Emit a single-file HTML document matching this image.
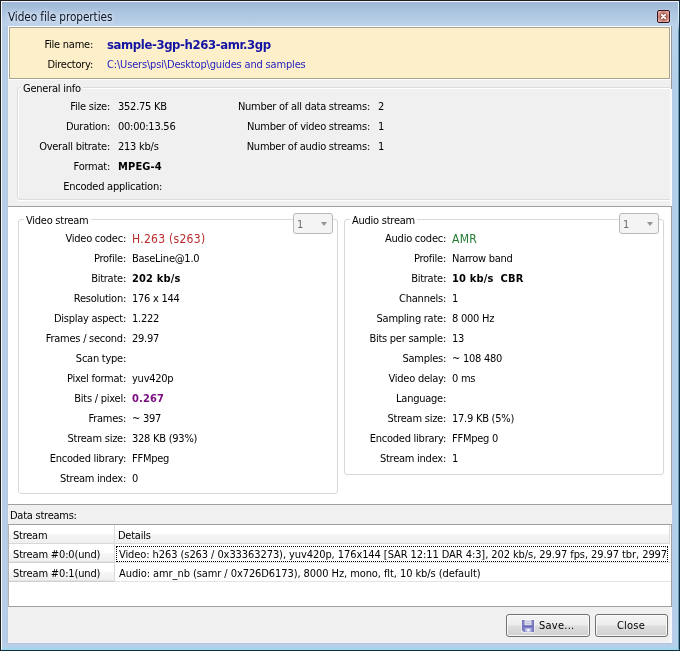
<!DOCTYPE html>
<html>
<head>
<meta charset="utf-8">
<title>Video file properties</title>
<style>
html,body{margin:0;padding:0;}
body{width:680px;height:651px;overflow:hidden;background:#b7cde7;position:relative;
  font-family:"DejaVu Sans Condensed","Liberation Sans",sans-serif;font-size:11px;color:#000;letter-spacing:-0.25px;line-height:14px;}
.abs{position:absolute;}
#win{position:absolute;left:0;top:0;width:680px;height:651px;overflow:hidden;will-change:transform;
  background:linear-gradient(to bottom,#9bb5d3 0px,#a9c2de 10px,#bdd3eb 26px,#b6cde7 80px,#b6cce8 600px,#bccdea 645px,#b0d2ea 647px,#a0d8ea 650px);}
#edge{position:absolute;left:0;top:0;width:678px;height:649px;border:1px solid #1c1d1e;border-right-color:#0f2d44;border-bottom-color:#10303f;}
#edge2{position:absolute;left:1px;top:1px;width:676px;height:647px;border:1px solid rgba(255,255,255,.9);border-right-color:rgba(255,255,255,0);border-bottom-color:rgba(255,255,255,0);}
#edge3{position:absolute;left:678px;top:2px;width:1px;height:647px;background:linear-gradient(to bottom,rgba(255,255,255,.9) 0px,rgba(255,255,255,.6) 18px,rgba(40,80,110,.45) 30px,rgba(40,80,110,.45) 100%);}
#botl{position:absolute;left:8px;top:642px;width:664px;height:1px;background:#eef5fb;}
#botl2{position:absolute;left:7px;top:643px;width:666px;height:1px;background:#b4c4d6;}
#rglow{position:absolute;left:674px;top:26px;width:5px;height:622px;background:linear-gradient(to right,rgba(170,214,236,0),rgba(170,214,236,1));}
#title{position:absolute;left:8px;top:9px;font-size:11.7px;line-height:16px;color:#0c142a;letter-spacing:-0.07px;
  text-shadow:0 0 4px rgba(255,255,255,.9),0 0 7px rgba(255,255,255,.7);white-space:nowrap;}
#close{position:absolute;left:657px;top:10px;width:11px;height:11px;border:1px solid #30121e;border-radius:2px;
  background:radial-gradient(ellipse at 50% 50%,#7a4030 0%,#a86454 40%,#dc9a92 68%,#f8c0c0 100%);box-shadow:0 0 0 1px rgba(255,255,255,.12);}
#client{position:absolute;left:8px;top:26px;width:664px;height:617px;background:#f0f0f0;}
.l,.v{position:absolute;white-space:nowrap;height:14px;}
.b{font-weight:bold;letter-spacing:0.15px;}
.red{color:#b82a2a;} .green{color:#237a30;} .purple{color:#7a1080;}
.big{font-size:12px;letter-spacing:0.28px;}
/* top panel */
#tp-wh{position:absolute;left:8px;top:26px;width:663px;height:54px;background:#fff;}
#tp-gr{position:absolute;left:9px;top:27px;width:659px;height:50px;border:1px solid #a5a392;background:#fdefc9;}
#tp-rline{position:absolute;left:671px;top:26px;width:1px;height:63px;background:#9a9a9a;}
#tp-gap{position:absolute;left:8px;top:80px;width:662px;height:7px;background:#f0f0f0;}
#fname{position:absolute;left:107px;top:37px;font-size:13px;line-height:16px;font-weight:bold;color:#1414a4;white-space:nowrap;letter-spacing:-0.4px;}
#dir{color:#1c1cc0;letter-spacing:-0.17px;}
/* group boxes */
.gb{position:absolute;border:1px solid #d8d8d8;border-radius:3px;box-sizing:border-box;}
.gbt{position:absolute;white-space:nowrap;padding:0 2px;height:14px;}
/* white panel */
#wp{position:absolute;left:8px;top:206px;width:663px;height:297px;background:#fff;border-top:1px solid #a0a0a0;border-bottom:1px solid #a0a0a0;border-right:1px solid #a0a0a0;}
.combo{position:absolute;width:38px;height:19px;border:1px solid #b8b8b8;border-radius:3px;background:#f4f4f4;color:#6d6d6d;}
.combo span{position:absolute;left:3px;top:4px;}
.combo i{position:absolute;left:27px;top:8px;width:0;height:0;border-left:3.5px solid transparent;border-right:3.5px solid transparent;border-top:4px solid #959595;}
/* table */
#tbl{position:absolute;left:8px;top:524px;width:662px;height:81px;border:1px solid #a0a0a0;border-left-color:#b0b4b8;background:#fff;overflow:hidden;}
.hd{position:absolute;background:linear-gradient(to bottom,#ffffff 0%,#ffffff 45%,#f5f5f6 55%,#efeff0 100%);border-right:1px solid #dcdcdc;border-bottom:1px solid #d8d8d8;box-sizing:border-box;padding:4px 0 0 4px;white-space:nowrap;}
.rh{letter-spacing:-0.15px;border-bottom-color:#cfcfcf;box-shadow:inset 0 -1px 0 #e4e4e4;}
.cell{position:absolute;white-space:nowrap;overflow:hidden;box-sizing:border-box;border-bottom:1px solid #e4e4e4;padding:4px 0 0 4px;letter-spacing:-0.08px;}
/* buttons */
.btn{position:absolute;top:614px;height:21px;border:1px solid #707070;border-radius:3px;
  background:linear-gradient(to bottom,#f4f4f4 0%,#ececec 48%,#dddddd 52%,#d0d0d0 100%);box-shadow:inset 0 0 0 1px rgba(255,255,255,.8);}
.btn span{position:absolute;top:4px;white-space:nowrap;}
</style>
</head>
<body>
<div id="win">
  <div id="rglow"></div>
  <div class="abs" style="left:2px;top:26px;width:6px;height:618px;background:linear-gradient(to right,#bccbe0 0%,#b5cfeb 35%,#b5cfeb 65%,#b7c7db 100%);"></div>
  <div id="edge"></div>
  <div id="edge2"></div>
  <div id="edge3"></div>
  <div id="title">Video file properties</div>
  <div id="close"><svg class="abs" style="left:3px;top:3px" width="5" height="5" viewBox="0 0 5 5"><path d="M0.7 0.7 L4.3 4.3 M4.3 0.7 L0.7 4.3" stroke="#fff" stroke-width="1.7" stroke-linecap="square" fill="none"/></svg></div>
  <div id="client"></div>
  <div id="botl"></div><div id="botl2"></div>

  <!-- top file panel -->
  <div id="tp-wh"></div>
  <div id="tp-gap"></div>
  <div id="tp-gr"></div>
  <div id="tp-rline"></div>
  <div class="l " style="right:587px;top:38px">File name:</div>
  <div class="l " style="right:587px;top:58px">Directory:</div>
  <div id="fname">sample-3gp-h263-amr.3gp</div>
  <div class="v " id="dir" style="left:107px;top:58px">C:\Users\psi\Desktop\guides and samples</div>

  <!-- general info group -->
  <div class="abs" style="left:8px;top:80px;width:662px;height:126px;overflow:hidden;"><div class="gb" style="left:9px;top:7px;width:670px;height:113px;border-color:#dcdcdc;box-shadow:0 1px 0 #fff,inset 1px 1px 0 #fff;"></div></div>
  <div class="abs" style="left:670px;top:89px;width:2px;height:117px;background:#fbfbfb;"></div>
  <div class="gbt" style="left:21px;top:82px;background:#f0f0f0;">General info</div>

  <!-- white panel with stream groups -->
  <div id="wp"></div>
  <div class="gb" style="left:18px;top:219px;width:320px;height:275px;"></div>
  <div class="gbt" style="left:24px;top:214px;background:#fff;">Video stream</div>
  <div class="gb" style="left:344px;top:219px;width:320px;height:256px;"></div>
  <div class="gbt" style="left:350px;top:214px;background:#fff;">Audio stream</div>
  <div class="combo" style="left:293px;top:213px;"><span>1</span><i></i></div>
  <div class="combo" style="left:619px;top:213px;"><span>1</span><i></i></div>

  <div class="l " style="right:570px;top:100px">File size:</div>
  <div class="v " style="left:118px;top:100px">352.75 KB</div>
  <div class="l " style="right:570px;top:120px">Duration:</div>
  <div class="v " style="left:118px;top:120px">00:00:13.56</div>
  <div class="l " style="right:570px;top:140px">Overall bitrate:</div>
  <div class="v " style="left:118px;top:140px">213 kb/s</div>
  <div class="l " style="right:570px;top:160px">Format:</div>
  <div class="v b" style="left:118px;top:160px">MPEG-4</div>
  <div class="l " style="right:518px;top:180px">Encoded application:</div>
  <div class="l " style="right:310px;top:100px">Number of all data streams:</div>
  <div class="v " style="left:378px;top:100px">2</div>
  <div class="l " style="right:310px;top:120px">Number of video streams:</div>
  <div class="v " style="left:378px;top:120px">1</div>
  <div class="l " style="right:310px;top:140px">Number of audio streams:</div>
  <div class="v " style="left:378px;top:140px">1</div>
  <div class="l " style="right:554px;top:232px">Video codec:</div>
  <div class="v red big" style="left:132px;top:232px">H.263 (s263)</div>
  <div class="l " style="right:554px;top:252px">Profile:</div>
  <div class="v " style="left:132px;top:252px">BaseLine@1.0</div>
  <div class="l " style="right:554px;top:272px">Bitrate:</div>
  <div class="v b" style="left:132px;top:272px">202 kb/s</div>
  <div class="l " style="right:554px;top:292px">Resolution:</div>
  <div class="v " style="left:132px;top:292px">176 x 144</div>
  <div class="l " style="right:554px;top:312px">Display aspect:</div>
  <div class="v " style="left:132px;top:312px">1.222</div>
  <div class="l " style="right:554px;top:332px">Frames / second:</div>
  <div class="v " style="left:132px;top:332px">29.97</div>
  <div class="l " style="right:554px;top:352px">Scan type:</div>
  <div class="l " style="right:554px;top:372px">Pixel format:</div>
  <div class="v " style="left:132px;top:372px">yuv420p</div>
  <div class="l " style="right:554px;top:392px">Bits / pixel:</div>
  <div class="v b purple" style="left:132px;top:392px">0.267</div>
  <div class="l " style="right:554px;top:412px">Frames:</div>
  <div class="v " style="left:132px;top:412px">~ 397</div>
  <div class="l " style="right:554px;top:432px">Stream size:</div>
  <div class="v " style="left:132px;top:432px">328 KB (93%)</div>
  <div class="l " style="right:554px;top:452px">Encoded library:</div>
  <div class="v " style="left:132px;top:452px">FFMpeg</div>
  <div class="l " style="right:554px;top:472px">Stream index:</div>
  <div class="v " style="left:132px;top:472px">0</div>
  <div class="l " style="right:234px;top:232px">Audio codec:</div>
  <div class="v green big" style="left:452px;top:232px">AMR</div>
  <div class="l " style="right:234px;top:252px">Profile:</div>
  <div class="v " style="left:452px;top:252px">Narrow band</div>
  <div class="l " style="right:234px;top:272px">Bitrate:</div>
  <div class="v b" style="left:452px;top:272px">10 kb/s&nbsp; CBR</div>
  <div class="l " style="right:234px;top:292px">Channels:</div>
  <div class="v " style="left:452px;top:292px">1</div>
  <div class="l " style="right:234px;top:312px">Sampling rate:</div>
  <div class="v " style="left:452px;top:312px">8 000 Hz</div>
  <div class="l " style="right:234px;top:332px">Bits per sample:</div>
  <div class="v " style="left:452px;top:332px">13</div>
  <div class="l " style="right:234px;top:352px">Samples:</div>
  <div class="v " style="left:452px;top:352px">~ 108 480</div>
  <div class="l " style="right:234px;top:372px">Video delay:</div>
  <div class="v " style="left:452px;top:372px">0 ms</div>
  <div class="l " style="right:234px;top:392px">Language:</div>
  <div class="l " style="right:234px;top:412px">Stream size:</div>
  <div class="v " style="left:452px;top:412px">17.9 KB (5%)</div>
  <div class="l " style="right:234px;top:432px">Encoded library:</div>
  <div class="v " style="left:452px;top:432px">FFMpeg 0</div>
  <div class="l " style="right:234px;top:452px">Stream index:</div>
  <div class="v " style="left:452px;top:452px">1</div>

  <!-- data streams -->
  <div class="v " style="left:10px;top:509px">Data streams:</div>
  <div id="tbl">
    <div class="hd" style="left:0;top:0;width:106px;height:19px;">Stream</div>
    <div class="hd" style="left:106px;top:0;width:555px;height:19px;padding-left:3px;">Details</div>
    <div class="hd rh" style="left:0;top:19px;width:106px;height:19px;">Stream #0:0(und)</div>
    <div class="hd rh" style="left:0;top:38px;width:106px;height:19px;">Stream #0:1(und)</div>
    <div class="cell" style="left:106px;top:19px;width:556px;height:19px;">Video: h263 (s263 / 0x33363273), yuv420p, 176x144 [SAR 12:11 DAR 4:3], 202 kb/s, 29.97 fps, 29.97 tbr, 2997</div>
    <div class="cell" style="left:106px;top:38px;width:556px;height:19px;">Audio: amr_nb (samr / 0x726D6173), 8000 Hz, mono, flt, 10 kb/s (default)</div>
    <div class="abs" style="left:107px;top:21px;width:550px;height:14px;border:1px dotted #000;"></div>
  </div>

  <div class="abs" style="left:670px;top:607px;width:2px;height:35px;background:#f6f7fb;"></div>
  <!-- buttons -->
  <div class="btn" style="left:506px;width:82px;">
    <svg class="abs" style="left:14px;top:4px" width="14" height="14" viewBox="0 0 14 14">
      <rect x="0" y="0" width="14" height="14" rx="1.5" fill="#ffffff" fill-opacity="0.45"/>
      <path d="M1 1 H13 V13 H3 L1 11 Z" fill="#8282c8"/>
      <path d="M1.5 1.5 H12.5 V12.5 H3.2 L1.5 10.8 Z" fill="none" stroke="#7472bc" stroke-width="1"/>
      <rect x="3.5" y="1" width="7" height="5.2" fill="#dedeec"/>
      <rect x="4.5" y="2" width="5" height="1" fill="#c4c4d8"/>
      <rect x="4.5" y="4" width="5" height="1" fill="#c8c8dc"/>
      <rect x="2" y="6.8" width="10" height="1" fill="#6462b6"/>
      <rect x="4" y="9" width="6.5" height="4" fill="#b4b4e0"/>
      <rect x="6.2" y="10" width="2.3" height="2.3" fill="#ffffff"/>
    </svg>
    <span style="left:32px;letter-spacing:0.25px;">Save...</span>
  </div>
  <div class="btn" style="left:595px;width:71px;"><span style="left:21px;letter-spacing:0.2px;">Close</span></div>
</div>
</body>
</html>
